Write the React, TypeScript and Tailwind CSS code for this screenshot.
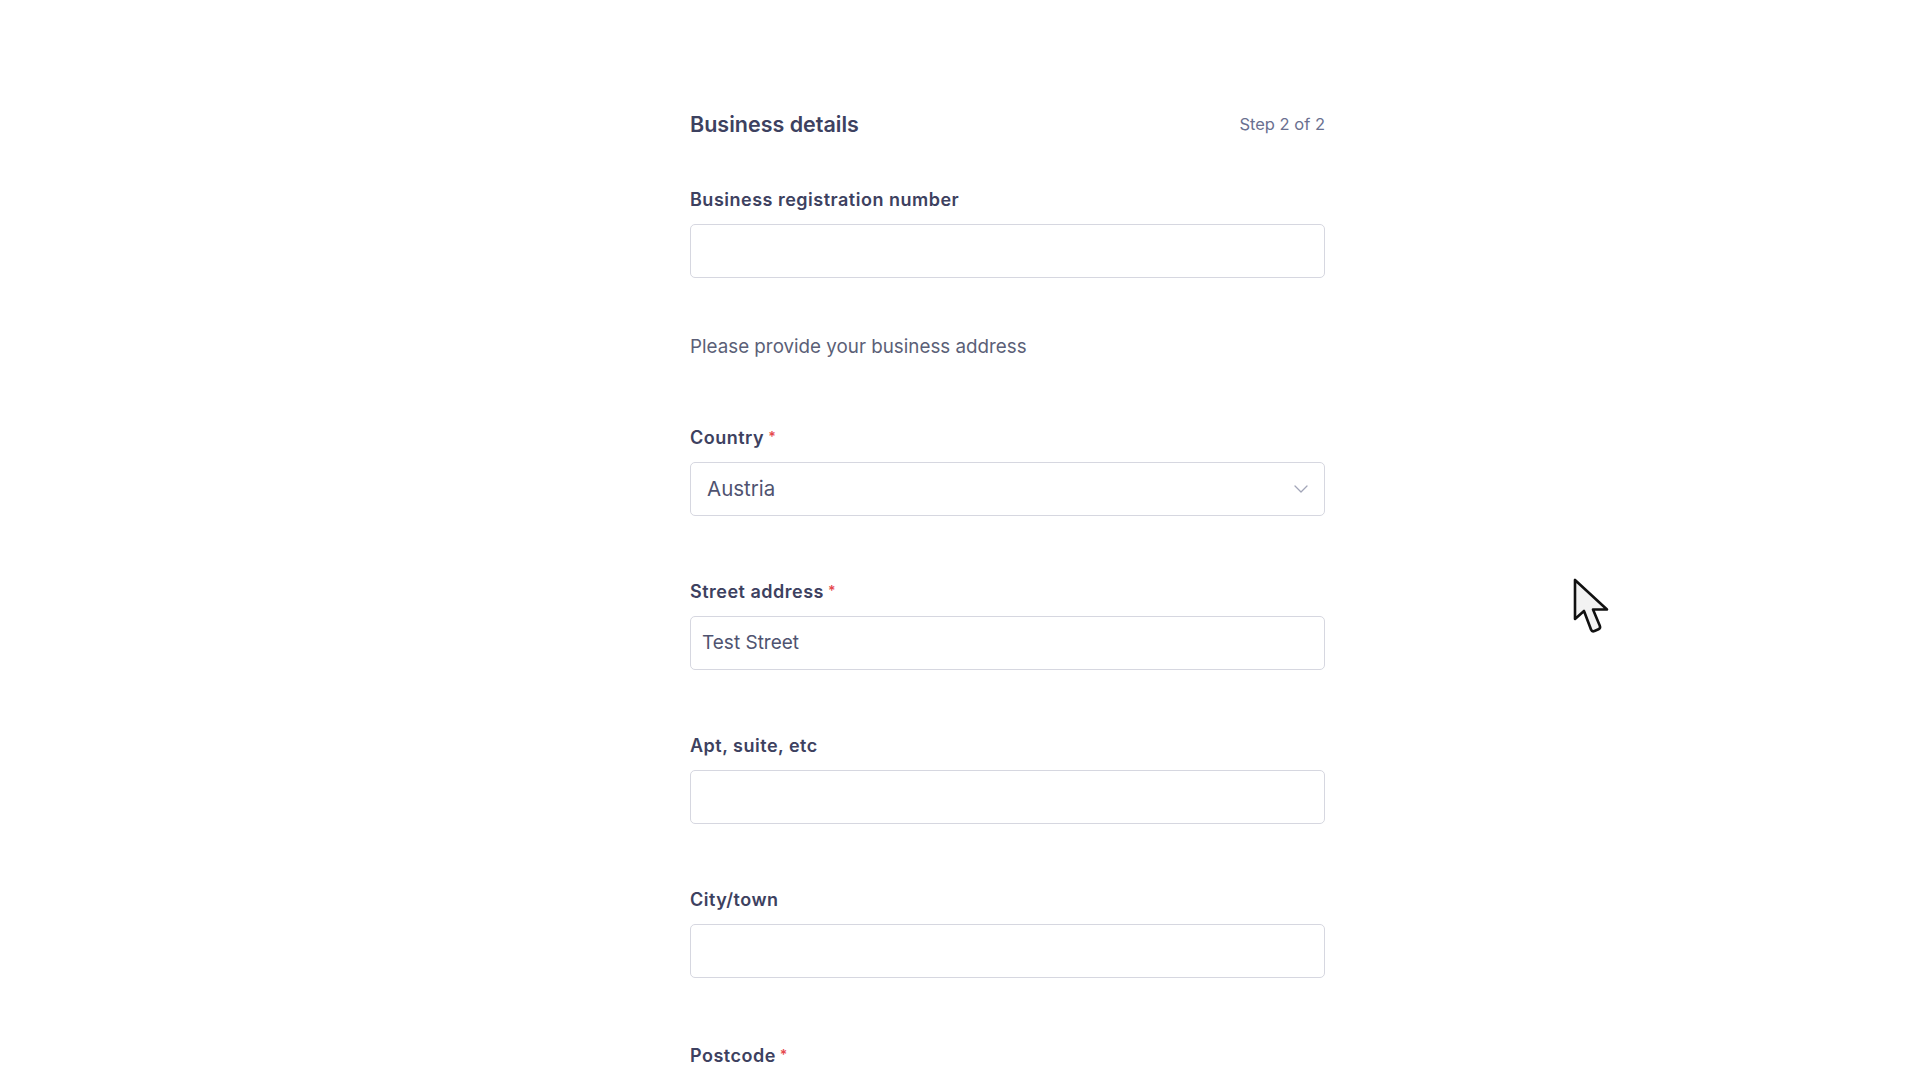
import React from "react";

function Label({ text, required }: { text: string; required?: boolean }) {
  return (
    <div className="h-[25px] flex items-center text-[18px] tracking-[0.5px] font-semibold text-[#3d4160] leading-[24px]">
      <span>{text}</span>
      {required && <span className="ml-[4px] text-[14px] text-[#e5484d] -mt-[2px]">*</span>}
    </div>
  );
}

function TextField({
  label,
  required,
  value,
  mb = "mb-[63px]",
}: {
  label: string;
  required?: boolean;
  value?: string;
  mb?: string;
}) {
  return (
    <div className={mb}>
      <Label text={label} required={required} />
      <div className="mt-[12px] h-[54px] border border-[#d6d7e0] rounded-[5px] bg-white flex items-center px-[11px] text-[19px] text-[#4f5370]">
        {value}
      </div>
    </div>
  );
}

export default function App() {
  return (
    <div className="relative h-screen overflow-hidden bg-white font-['Inter',sans-serif]">
      <div className="ml-[690px] w-[635px] pt-[110px]">
        <div className="h-[28px] flex items-center justify-between">
          <span className="text-[21.5px] font-semibold text-[#3d4160]">Business details</span>
          <span className="text-[16.5px] text-[#6a7090]">Step 2 of 2</span>
        </div>
        <div className="mt-[49px]">
          <Label text="Business registration number" />
          <div className="mt-[12px] h-[54px] border border-[#d6d7e0] rounded-[5px] bg-white" />
        </div>
        <p className="mt-[57px] h-[24px] leading-[24px] text-[18.8px] text-[#5b5f77]">Please provide your business address</p>
        <div className="mt-[66px] mb-[63px]">
          <Label text="Country" required />
          <div className="mt-[12px] h-[54px] border border-[#d6d7e0] rounded-[5px] bg-white flex items-center justify-between pl-[16px] pr-[16px]">
            <span className="text-[20.5px] text-[#4f5370]">Austria</span>
            <svg width="14" height="8" viewBox="0 0 14 8" fill="none">
              <polyline points="1,1 7,7 13,1" stroke="#a2a5b8" strokeWidth="1.3" strokeLinecap="round" strokeLinejoin="round" />
            </svg>
          </div>
        </div>
        <TextField label="Street address" required value="Test Street" />
        <TextField label="Apt, suite, etc" />
        <TextField label="City/town" mb="mb-[65px]" />
        <TextField label="Postcode" required />
      </div>
      <svg className="absolute left-[1572px] top-[578px]" width="38" height="60" viewBox="0 0 38 60" fill="none">
        <path
          d="M3 2 L3 41 L12 33 L19 51.5 Q20 54 22.5 53 L26.5 51.3 Q28.8 50.2 27.8 47.8 L21 31.5 L35 31.5 Z"
          fill="#f2f2f2"
          stroke="#111"
          strokeWidth="2.6"
          strokeLinejoin="round"
        />
      </svg>
    </div>
  );
}
